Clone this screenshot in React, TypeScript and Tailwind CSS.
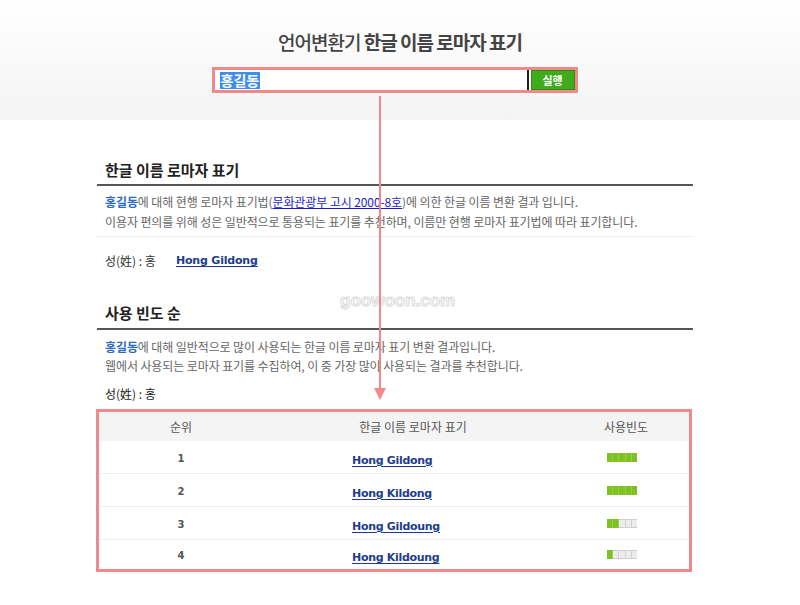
import React from "react";

const KR = '"Noto Sans CJK KR", "Noto Sans", sans-serif';
const EN = '"DejaVu Sans", "Noto Sans CJK KR", sans-serif';

function Bar({ filled }: { filled: number }) {
  return (
    <div className="flex h-[9px] w-[30px]">
      {[0, 1, 2, 3, 4].map((i) => (
        <div
          key={i}
          className={
            i < filled
              ? "h-full flex-1 bg-[#7fc123] border-r border-[#95cf45] last:border-r-0"
              : "h-full flex-1 bg-[#ececec] border-r border-[#d0d0d0] border-y last:border-r-0"
          }
        />
      ))}
    </div>
  );
}

const rows = [
  { rank: 1, name: "Hong Gildong", filled: 5 },
  { rank: 2, name: "Hong Kildong", filled: 5 },
  { rank: 3, name: "Hong Gildoung", filled: 2 },
  { rank: 4, name: "Hong Kildoung", filled: 1 },
];

export default function App() {
  return (
    <div
      className="relative h-[605px] w-[800px] overflow-hidden bg-white"
      style={{ fontFamily: KR }}
    >
      {/* Header */}
      <div className="flex h-[120px] flex-col items-center bg-gradient-to-b from-white to-[#f4f4f4] pt-[28px]">
        <h1 className="text-[19px] leading-[28px] tracking-[-1px] text-[#444]">
          <span className="font-medium">언어변환기</span>{" "}
          <span className="font-bold">한글 이름 로마자 표기</span>
        </h1>
        <div className="mr-[11px] mt-[11px] flex h-[26px] w-[366px] items-stretch border-[3px] border-[#f08a8a] bg-white">
          <div className="flex flex-1 items-center border-r-2 border-[#222] pl-[5px]">
            <span className="bg-[#3d8ef0] px-[1px] text-[14px] font-bold leading-[17px] text-white">
              홍길동
            </span>
          </div>
          <div className="flex items-center bg-white pl-[2px]">
            <button className="flex h-[20px] w-[44px] items-center justify-center border border-[#2f8d12] bg-[#40ab1d] text-[11px] font-bold text-white">
              실행
            </button>
          </div>
        </div>
      </div>

      {/* Content */}
      <div className="ml-[97px] w-[596px]">
        {/* Section 1 */}
        <div className="mt-[40px] border-b-2 border-[#555] px-[8px] pb-[4px]">
          <h2 className="text-[15px] font-bold leading-[20px] text-[#222]">
            한글 이름 로마자 표기
          </h2>
        </div>
        <div className="border-b border-[#eee] px-[8px] pb-[4px] pt-[6px] text-[12px] leading-[20px] tracking-[-0.1px] text-[#666]">
          <p>
            <span className="font-bold text-[#2a6bc3]">홍길동</span>에 대해 현행 로마자 표기법(
            <span className="text-[#1c1cd0] underline">문화관광부 고시 2000-8호</span>)에 의한
            한글 이름 변환 결과 입니다.
          </p>
          <p>
            이용자 편의를 위해 성은 일반적으로 통용되는 표기를 추천하며, 이름만 현행 로마자
            표기법에 따라 표기합니다.
          </p>
        </div>
        <div className="flex items-center px-[8px] pt-[14px] leading-[20px]">
          <span className="w-[71px] text-[12px] text-[#333]">성(姓) : 홍</span>
          <span
            className="text-[11px] font-bold tracking-[-0.2px] text-[#1d3d8c] underline underline-offset-2"
            style={{ fontFamily: EN }}
          >
            Hong Gildong
          </span>
        </div>

        {/* Section 2 */}
        <div className="mt-[32px] border-b-2 border-[#555] px-[8px] pb-[5px]">
          <h2 className="text-[15px] font-bold leading-[20px] text-[#222]">사용 빈도 순</h2>
        </div>
        <div className="px-[8px] pt-[7px] text-[12px] leading-[19px] tracking-[-0.1px] text-[#666]">
          <p>
            <span className="font-bold text-[#2a6bc3]">홍길동</span>에 대해 일반적으로 많이
            사용되는 한글 이름 로마자 표기 변환 결과입니다.
          </p>
          <p>
            웹에서 사용되는 로마자 표기를 수집하여, 이 중 가장 많이 사용되는 결과를 추천합니다.
          </p>
        </div>
        <div className="px-[8px] pt-[9px] text-[12px] leading-[20px] text-[#222]">
          성(姓) : 홍
        </div>

        {/* Table */}
        <div className="-ml-[1px] mt-[5px] w-[596px] border-[3px] border-[#f08a8a]">
          <div className="flex h-[29px] items-center bg-[#f4f4f4] text-[12px] text-[#555]">
            <div className="w-[164px] text-center">순위</div>
            <div className="w-[300px] text-center">한글 이름 로마자 표기</div>
            <div className="flex-1 text-center">사용빈도</div>
          </div>
          {rows.map((r, i) => (
            <div
              key={r.rank}
              className={
                i < rows.length - 1
                  ? "flex h-[33px] items-center border-b border-[#eee]"
                  : "flex h-[29px] items-center"
              }
            >
              <div
                className="w-[164px] pt-[2px] text-center text-[10px] font-bold text-[#555]"
                style={{ fontFamily: EN }}
              >
                {r.rank}
              </div>
              <div className="w-[300px] pl-[89px]">
                <span
                  className="text-[11px] font-bold tracking-[-0.3px] text-[#1d3d8c] underline underline-offset-2"
                  style={{ fontFamily: EN }}
                >
                  {r.name}
                </span>
              </div>
              <div className="flex flex-1 justify-center pr-[8px]">
                <Bar filled={r.filled} />
              </div>
            </div>
          ))}
        </div>
      </div>

      {/* Watermark */}
      <div
        className="pointer-events-none absolute left-[340px] top-[288px] text-[17px] font-bold text-[#fafafa] [-webkit-text-stroke:1px_#dcdcdc]"
        style={{ fontFamily: '"Liberation Sans", sans-serif' }}
      >
        goowoon.com
      </div>

      {/* Arrow annotation */}
      <svg
        className="pointer-events-none absolute left-[372px] top-[96px]"
        width="16"
        height="312"
        viewBox="0 0 16 312"
      >
        <line x1="8" y1="0" x2="8" y2="296" stroke="#f08a8a" strokeWidth="2" />
        <polygon points="2,292 14,292 8,304" fill="#f08a8a" />
      </svg>
    </div>
  );
}
